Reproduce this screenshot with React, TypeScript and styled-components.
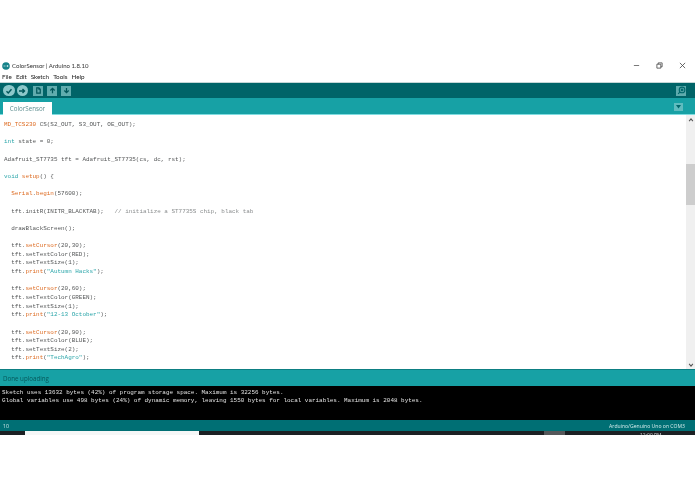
import React from "react";
import styled, { createGlobalStyle } from "styled-components";

const GlobalStyle = createGlobalStyle`
  html, body {
    margin: 0;
    padding: 0;
    background: #ffffff;
  }
`;

const Page = styled.div`
  width: 695px;
  height: 494px;
  padding-top: 60px;
  box-sizing: border-box;
  overflow: hidden;
  background: #ffffff;
  font-family: "Open Sans", sans-serif;
  filter: blur(0.4px);
`;

const TitleBar = styled.div`
  height: 11px;
  padding-left: 2px;
  display: flex;
  align-items: center;
  gap: 2px;
  font-family: Lato, sans-serif;
  font-size: 6.05px;
  color: #333;
`;

const Title = styled.span`
  flex: 1;
`;

const WindowControls = styled.div`
  display: flex;
  align-items: center;
  gap: 16px;
  padding-right: 9px;
`;

const MenuBar = styled.div`
  height: 11px;
  padding-left: 2px;
  display: flex;
  align-items: center;
  gap: 4px;
  font-family: Lato, sans-serif;
  font-size: 6.3px;
  color: #222;
`;

const ToolBar = styled.div`
  height: 15px;
  padding: 0 9px 0 3px;
  display: flex;
  align-items: center;
  gap: 2px;
  background: #006468;
  border-top: 1px solid #c4d6d6;
`;

const RoundButton = styled.div`
  width: 11.5px;
  height: 11.5px;
  border-radius: 50%;
  background: #8cc8ca;
  display: flex;
  align-items: center;
  justify-content: center;
`;

const SquareButton = styled.div<{ $first?: boolean }>`
  width: 10px;
  height: 10px;
  margin-left: ${(p) => (p.$first ? "3px" : "2px")};
  background: #60acae;
  display: flex;
  align-items: center;
  justify-content: center;
`;

const Spacer = styled.div`
  flex: 1;
`;

const SerialButton = styled.div`
  width: 10px;
  height: 10px;
  background: #5eabad;
  display: flex;
  align-items: center;
  justify-content: center;
`;

const TabStrip = styled.div`
  height: 17px;
  padding: 0 12px 0 3px;
  display: flex;
  align-items: flex-end;
  justify-content: space-between;
  background: #17a1a5;
  box-shadow: inset 0 -1px 0 #7fdce0;
`;

const Tab = styled.div`
  width: 49px;
  height: 13.5px;
  background: #ffffff;
  color: #5f8f91;
  font-size: 6.2px;
  display: flex;
  align-items: center;
  justify-content: center;
`;

const TabMenu = styled.div`
  width: 9px;
  height: 8.5px;
  margin-bottom: 4px;
  background: #5fbcbf;
  display: flex;
  align-items: center;
  justify-content: center;
`;

const EditorArea = styled.div`
  height: 254px;
  display: flex;
  background: #ffffff;
`;

const Code = styled.pre`
  flex: 1;
  margin: 0;
  padding: 6.2px 0 0 4px;
  overflow: hidden;
  font-family: "Liberation Mono", monospace;
  font-size: 5.95px;
  line-height: 8.65px;
  color: #555758;
`;

const CodeLine = styled.div`
  height: 8.65px;
`;

const Token = styled.span<{ $kind: "orange" | "teal" | "note" | "plain" }>`
  color: ${(p) =>
    ({ orange: "#dd6a20", teal: "#2aa5a9", note: "#8a8d8e", plain: "#555758" })[p.$kind]};
`;

const ScrollBar = styled.div`
  width: 9px;
  background: #f0f0f0;
  display: flex;
  flex-direction: column;
  align-items: center;
`;

const ScrollArrow = styled.div<{ $down?: boolean }>`
  height: 9px;
  width: 9px;
  margin-top: ${(p) => (p.$down ? "auto" : "0")};
  display: flex;
  align-items: center;
  justify-content: center;
`;

const ScrollThumb = styled.div`
  width: 9px;
  height: 41px;
  margin-top: 40px;
  background: #cdcdcd;
`;

const StatusBar = styled.div`
  height: 17px;
  padding-left: 3px;
  display: flex;
  align-items: center;
  box-sizing: border-box;
  background: #17a1a5;
  border-top: 1px solid #0d7f83;
  color: #06585b;
  font-size: 6.2px;
`;

const ConsoleOut = styled.pre`
  height: 34px;
  margin: 0;
  padding: 2.6px 0 0 2px;
  box-sizing: border-box;
  background: #000000;
  color: #e2e2e2;
  font-family: "Liberation Mono", monospace;
  font-size: 5.94px;
  line-height: 8.8px;
`;

const FooterBar = styled.div`
  height: 11px;
  padding: 0 10px 0 3px;
  display: flex;
  align-items: center;
  justify-content: space-between;
  background: #006f74;
  color: #d5ecec;
  font-size: 5.1px;
`;

const TaskBar = styled.div`
  height: 4px;
  display: flex;
  overflow: hidden;
  background: #1c2023;
`;

const TaskGap = styled.div<{ $w: number }>`
  width: ${(p) => p.$w}px;
`;

const TaskWindow = styled.div`
  width: 174px;
  background: #f5f7f7;
`;

const TaskIcon = styled.div`
  width: 21px;
  background: #55585a;
`;

const Clock = styled.div`
  margin-left: 75px;
  color: #cfd2d3;
  font-size: 5px;
  line-height: 6px;
  margin-top: 1px;
`;

type Part = [string, "orange" | "teal" | "note" | "plain"];

const cursorLines = (y: number, color: string, size: number, msg: string): Part[][] => [
  [["  tft.", "plain"], ["setCursor", "orange"], [`(20,${y});`, "plain"]],
  [["  tft.setTextColor(" + color + ");", "plain"]],
  [[`  tft.setTextSize(${size});`, "plain"]],
  [["  tft.", "plain"], ["print", "orange"], ["(", "plain"], [`"${msg}"`, "teal"], [");", "plain"]],
];

const lines: Part[][] = [
  [["MD_TCS230", "orange"], [" CS(S2_OUT, S3_OUT, OE_OUT);", "plain"]],
  [],
  [["int", "teal"], [" state = 0;", "plain"]],
  [],
  [["Adafruit_ST7735 tft = Adafruit_ST7735(cs, dc, rst);", "plain"]],
  [],
  [["void", "teal"], [" ", "plain"], ["setup", "orange"], ["() {", "plain"]],
  [],
  [["  ", "plain"], ["Serial", "orange"], [".", "plain"], ["begin", "orange"], ["(57600);", "plain"]],
  [],
  [["  tft.initR(INITR_BLACKTAB);   ", "plain"], ["// initialize a ST7735S chip, black tab", "note"]],
  [],
  [["  drawBlackScreen();", "plain"]],
  [],
  ...cursorLines(30, "RED", 1, "Autumn Hacks"),
  [],
  ...cursorLines(60, "GREEN", 1, "12-13 October"),
  [],
  ...cursorLines(90, "BLUE", 2, "TechAgro"),
];

const Icon = ({ d, size = 8, color = "#00565a" }: { d: string; size?: number; color?: string }) => (
  <svg width={size} height={size} viewBox="0 0 16 16" fill="none" stroke={color} strokeWidth="2.8">
    <path d={d} />
  </svg>
);

export default function App() {
  return (
    <>
      <GlobalStyle />
      <Page>
        <TitleBar>
          <svg width="8" height="8" viewBox="0 0 8 8">
            <circle cx="4" cy="4" r="3.8" fill="#17838a" />
            <path d="M1.5 4h2M4.5 4h2M5.5 3v2" stroke="#d5eeee" strokeWidth="0.7" />
          </svg>
          <Title>ColorSensor | Arduino 1.8.10</Title>
          <WindowControls>
            <svg width="7" height="7" viewBox="0 0 8 8" stroke="#555" strokeWidth="0.9" fill="none">
              <path d="M1 4h6" />
            </svg>
            <svg width="7" height="7" viewBox="0 0 8 8" stroke="#444" strokeWidth="0.9" fill="none">
              <path d="M1 2.5h4.5v4.5H1zM2.5 2.5V1H7v4.5H5.5" />
            </svg>
            <svg width="7" height="7" viewBox="0 0 8 8" stroke="#444" strokeWidth="0.9" fill="none">
              <path d="M1 1l6 6M7 1L1 7" />
            </svg>
          </WindowControls>
        </TitleBar>
        <MenuBar>
          <span>File</span>
          <span>Edit</span>
          <span>Sketch</span>
          <span>Tools</span>
          <span>Help</span>
        </MenuBar>
        <ToolBar>
          <RoundButton>
            <Icon d="M3 8.5l3.5 3.5L13 4.5" />
          </RoundButton>
          <RoundButton>
            <Icon d="M2 8h11M9 4l4 4-4 4" />
          </RoundButton>
          <SquareButton $first>
            <Icon size={7} d="M4 2h5l3 3v9H4zM9 2v3h3" />
          </SquareButton>
          <SquareButton>
            <Icon size={7} d="M8 14V3M3 8l5-5 5 5" />
          </SquareButton>
          <SquareButton>
            <Icon size={7} d="M8 2v11M3 8l5 5 5-5" />
          </SquareButton>
          <Spacer />
          <SerialButton>
            <svg width="9" height="9" viewBox="0 0 16 16" fill="none" stroke="#00686c" strokeWidth="2">
              <circle cx="9" cy="7" r="5" />
              <circle cx="9" cy="7" r="1.5" />
              <path d="M5 11l-3 3" />
            </svg>
          </SerialButton>
        </ToolBar>
        <TabStrip>
          <Tab>ColorSensor</Tab>
          <TabMenu>
            <svg width="5" height="4" viewBox="0 0 5 4">
              <path d="M0 0h5L2.5 3.5z" fill="#00686c" />
            </svg>
          </TabMenu>
        </TabStrip>
        <EditorArea>
          <Code>
            {lines.map((parts, i) => (
              <CodeLine key={i}>
                {parts.map(([text, kind], j) => (
                  <Token key={j} $kind={kind}>
                    {text}
                  </Token>
                ))}
              </CodeLine>
            ))}
          </Code>
          <ScrollBar>
            <ScrollArrow>
              <Icon size={6} d="M3 11l5-6 5 6" color="#555" />
            </ScrollArrow>
            <ScrollThumb />
            <ScrollArrow $down>
              <Icon size={6} d="M3 5l5 6 5-6" color="#555" />
            </ScrollArrow>
          </ScrollBar>
        </EditorArea>
        <StatusBar>Done uploading</StatusBar>
        <ConsoleOut>
          {"Sketch uses 13632 bytes (42%) of program storage space. Maximum is 32256 bytes.\n"}
          {"Global variables use 498 bytes (24%) of dynamic memory, leaving 1550 bytes for local variables. Maximum is 2048 bytes."}
        </ConsoleOut>
        <FooterBar>
          <span>10</span>
          <span>Arduino/Genuino Uno on COM3</span>
        </FooterBar>
        <TaskBar>
          <TaskGap $w={25} />
          <TaskWindow />
          <TaskGap $w={345} />
          <TaskIcon />
          <Clock>12:00 PM</Clock>
        </TaskBar>
      </Page>
    </>
  );
}
